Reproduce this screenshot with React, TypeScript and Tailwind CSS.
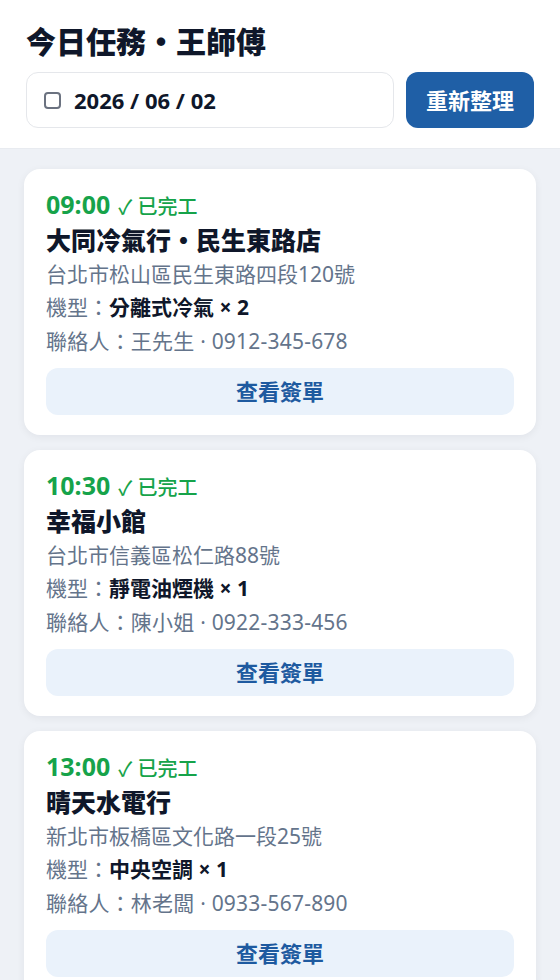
import React from "react";

const jobs = [
  {
    time: "09:00",
    name: "大同冷氣行・民生東路店",
    addr: "台北市松山區民生東路四段120號",
    model: "分離式冷氣 × 2",
    contact: "王先生 · 0912-345-678",
  },
  {
    time: "10:30",
    name: "幸福小館",
    addr: "台北市信義區松仁路88號",
    model: "靜電油煙機 × 1",
    contact: "陳小姐 · 0922-333-456",
  },
  {
    time: "13:00",
    name: "晴天水電行",
    addr: "新北市板橋區文化路一段25號",
    model: "中央空調 × 1",
    contact: "林老闆 · 0933-567-890",
  },
];

const font = {
  fontFamily: '"Noto Sans", "Noto Sans CJK TC", sans-serif',
};

export default function App() {
  return (
    <div className="min-h-[980px] bg-[#eef1f6]" style={font}>
      <header className="bg-white px-[26px] pt-[21px] pb-[20px] border-b border-[#e8ebf0]">
        <h1 className="text-[30px] leading-[41px] font-black text-[#0f172a]">今日任務・王師傅</h1>
        <div className="mt-[10px] flex gap-[12px]">
          <div className="flex-1 h-[56px] rounded-[12px] border border-[#e5e7eb] flex items-center pl-[17px]">
            <span className="w-[17px] h-[17px] rounded-[4px] border-2 border-[#6b7280] mr-[13px]"></span>
            <span className="text-[22px] font-bold text-[#0f172a]">2026 / 06 / 02</span>
          </div>
          <button className="w-[128px] h-[56px] rounded-[12px] bg-[#1f5fa6] text-white text-[22px] font-bold">
            重新整理
          </button>
        </div>
      </header>
      <main className="px-[24px] pt-[20px] flex flex-col gap-[15px]">
        {jobs.map((j) => (
          <div
            key={j.time}
            className="bg-white rounded-[16px] px-[22px] pt-[19px] pb-[20px] shadow-[0_2px_8px_rgba(15,23,42,0.06)]"
          >
            <div className="leading-[33px] text-[#16a34a] flex items-baseline">
              <span className="text-[25px] font-bold">{j.time}</span>
              <span className="text-[20px] font-medium ml-[8px]">✓ 已完工</span>
            </div>
            <div className="text-[25px] leading-[35px] font-black text-[#0f172a]">{j.name}</div>
            <div className="text-[21px] leading-[33px] text-[#64748b]">{j.addr}</div>
            <div className="text-[21px] leading-[33px] text-[#64748b]">
              機型：<span className="font-bold text-[#0f172a]">{j.model}</span>
            </div>
            <div className="text-[21px] leading-[35px] text-[#64748b] tracking-[0.01em]">聯絡人：{j.contact}</div>
            <button className="mt-[9px] w-full h-[47px] rounded-[12px] bg-[#eaf2fb] text-[#1e5aa0] text-[22px] font-bold">
              查看簽單
            </button>
          </div>
        ))}
      </main>
    </div>
  );
}
